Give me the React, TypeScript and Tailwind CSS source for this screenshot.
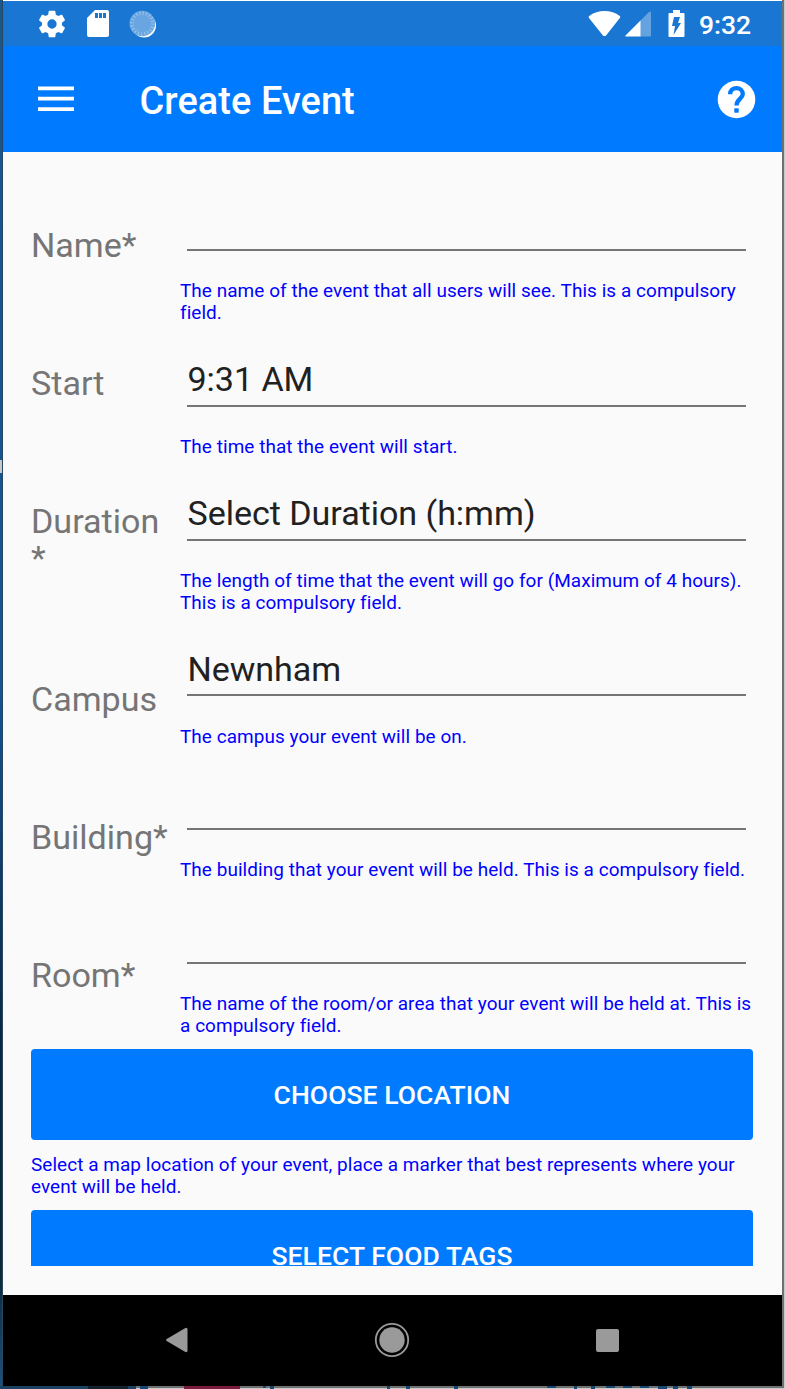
import React from "react";

const labels = ["Name*", "Start", "Duration *", "Campus", "Building*", "Room*"];

const fields = [
  { value: "", hint: ["The name of the event that all users will see. This is a compulsory", "field."] },
  { value: "9:31 AM", hint: ["The time that the event will start."] },
  { value: "Select Duration (h:mm)", hint: ["The length of time that the event will go for (Maximum of 4 hours).", "This is a compulsory field."] },
  { value: "Newnham", hint: ["The campus your event will be on."] },
  { value: "", hint: ["The building that your event will be held. This is a compulsory field."] },
  { value: "", hint: ["The name of the room/or area that your event will be held at. This is", "a compulsory field."] },
];

function Hint({ lines }: { lines: string[] }) {
  return (
    <div className="text-[18.95px] leading-[22px] tracking-[0.065px] whitespace-nowrap text-[#0000ff]">
      {lines.map((line) => (
        <div key={line}>{line}</div>
      ))}
    </div>
  );
}

function StatusBar() {
  return (
    <div className="flex h-[45px] shrink-0 items-center bg-[#1976d2] pr-[30px] pl-[33px] text-white">
      <svg className="size-[32px]" viewBox="0 0 24 24" fill="currentColor">
        <path d="M19.43 12.98c.04-.32.07-.64.07-.98s-.03-.66-.07-.98l2.11-1.65c.19-.15.24-.42.12-.64l-2-3.46c-.12-.22-.39-.3-.61-.22l-2.49 1c-.52-.4-1.08-.73-1.69-.98l-.38-2.65A.488.488 0 0 0 14 2h-4c-.25 0-.46.18-.49.42l-.38 2.65c-.61.25-1.17.59-1.69.98l-2.49-1c-.23-.09-.49 0-.61.22l-2 3.46c-.13.22-.07.49.12.64l2.11 1.65c-.04.32-.07.65-.07.98s.03.66.07.98l-2.11 1.65c-.19.15-.24.42-.12.64l2 3.46c.12.22.39.3.61.22l2.49-1c.52.4 1.08.73 1.69.98l.38 2.65c.03.24.24.42.49.42h4c.25 0 .46-.18.49-.42l.38-2.65c.61-.25 1.17-.59 1.69-.98l2.49 1c.23.09.49 0 .61-.22l2-3.46c.12-.22.07-.49-.12-.64zM12 15.5a3.5 3.5 0 1 1 0-7 3.5 3.5 0 0 1 0 7" />
      </svg>
      <svg className="ml-[19px] h-[27px] w-[22px]" viewBox="0 0 22 27">
        <path fill="currentColor" d="M8 0H20Q22 0 22 2V25Q22 27 20 27H2Q0 27 0 25V8Z" />
        <path fill="#1976d2" d="M8 3h3v5H8zM12 3h3v5h-3zM16 3h3v5h-3z" />
      </svg>
      <svg className="ml-[20px] size-[28px]" viewBox="0 0 28 28">
        <circle cx="15" cy="15.500" r="12" fill="#fff" />
        <circle cx="13.300" cy="13.500" r="12.800" fill="#69a6e1" />
        <circle cx="13.300" cy="13.500" r="10.500" fill="none" stroke="#94c0ea" strokeWidth="3.600" strokeDasharray="1.2 2.1" />
      </svg>
      <div className="flex-1" />
      <svg className="h-[27px] w-[33px]" viewBox="0 0 34 27" fill="currentColor">
        <path d="M17 26.5Q16 26.5 15.2 25.5L.8 7.5Q.2 6.5 1.2 5.7Q8 .5 17 .5T32.8 5.7Q33.7 6.5 33 7.5L18.8 25.5Q18 26.5 17 26.5Z" />
      </svg>
      <svg className="ml-[4px] h-[27px] w-[27px]" viewBox="0 0 27 27">
        <path fill="#65a2e0" d="M15 11 24 2Q26 .5 26 3V25Q26 26.500 25 26.500H15Z" />
        <path fill="#fff" d="M15.500 10.500V26.500H1Q-.5 26.500 1 25Z" />
      </svg>
      <svg className="ml-[16px] h-[27px] w-[17px]" viewBox="0 0 17 27">
        <path fill="#fff" d="M5 0h7v3h3.500Q16.500 3 16.500 4V26Q16.500 27 15.500 27H1.500Q.5 27 .5 26V4Q.5 3 1.500 3H5Z" />
        <path fill="#1976d2" d="M6 7H12L10 13H13L5.500 25L7 16H4Z" />
      </svg>
      <span className="ml-[14px] w-[53px] pt-[2px] text-[26.5px] leading-[30px] font-medium whitespace-nowrap">9:32</span>
    </div>
  );
}

function AppBar() {
  return (
    <header className="flex h-[106px] shrink-0 items-center bg-[#007bff] pr-[26px] pl-[35px] text-white">
      <svg className="h-[26px] w-[36px]" viewBox="0 0 36 26" fill="currentColor">
        <path d="M0 .5h36v3.700H0zM0 10.800h36v3.700H0zM0 21.200h36v3.700H0z" />
      </svg>
      <h1 className="ml-[65.5px] flex-1 pt-[3px] text-[37.9px] leading-[46px] font-medium tracking-[0.08px] whitespace-nowrap">Create Event</h1>
      <svg className="size-[40px]" viewBox="0 0 40 40">
        <circle cx="20.500" cy="20.500" r="18.800" fill="#fff" />
        <path d="M14.100 15.300C14.100 11.300 17 9.100 20.500 9.100S26.800 11.500 26.800 15.100C26.800 19.500 20.500 20 20.500 26.500" fill="none" stroke="#007bff" strokeWidth="4.300" />
        <path d="M18.300 29.300h4.400v4.400h-4.400z" fill="#007bff" />
      </svg>
    </header>
  );
}

function Field({ value, hint }: { value: string; hint: string[] }) {
  return (
    <div className={hint.length === 2 ? "h-[155.9px] shrink-0" : "h-[133.7px] shrink-0"}>
      <div className="ml-[7px] flex h-[66px] w-[559px] items-start border-b-2 border-[#757575] pt-[18.5px] pl-[0.5px] text-[34.1px] leading-[40px] tracking-[-0.05px] whitespace-nowrap text-[#212121]">
        {value}
      </div>
      <div className="pt-[29.3px]">
        <Hint lines={hint} />
      </div>
    </div>
  );
}

function NavBar() {
  return (
    <nav className="flex h-[91px] shrink-0 items-center justify-between bg-black pr-[163px] pl-[162px] text-[#9a9a9a]">
      <svg className="mb-px h-[26px] w-[24px]" viewBox="0 0 24 26" fill="currentColor">
        <path d="M1.700 12 20 1.200Q22.500 0 22.500 2.500V23.500Q22.500 26 20 24.800L1.700 14Q.200 13 1.700 12Z" />
      </svg>
      <svg className="mr-[2px] mb-px size-[36px]" viewBox="0 0 36 36">
        <circle cx="18" cy="18" r="16.200" fill="none" stroke="currentColor" strokeWidth="1.800" />
        <circle cx="18" cy="18" r="12.700" fill="currentColor" />
      </svg>
      <div className="size-[23px] rounded-[2px] bg-[#9a9a9a]" />
    </nav>
  );
}

export default function App() {
  return (
    <div className="h-[1389px] w-[785px] overflow-hidden bg-[#c8c8c8] font-['Roboto',sans-serif]">
      <div className="flex h-[1386px]">
        <div className="flex w-[3px] shrink-0 flex-col border-r border-[#28465f] bg-[linear-gradient(#17588f_0%,#125496_50%,#0b2740_75%,#102834_92%,#195382_100%)]">
          <div className="h-[460px]" />
          <div className="h-[13px] w-[2px] bg-[#c8c8c8]" />
        </div>
        <div className="flex w-[779px] shrink-0 flex-col border-t border-white bg-[#fafafa]">
          <StatusBar />
          <AppBar />
          <main className="h-[1114px] shrink-0 overflow-hidden pr-[29px] pl-[28px]">
            <div className="flex h-[897px]">
              <div className="flex w-[149px] shrink-0 flex-col gap-[98px] pt-[73px] text-[34.1px] leading-[37px] text-[#757575]">
                {labels.map((label) => (
                  <div key={label} className={label === "Duration *" ? "h-[80px] w-[138px] pt-[1.5px]" : "h-[40px] w-[138px] pt-[1.5px]"}>
                    {label}
                  </div>
                ))}
              </div>
              <div className="flex flex-1 flex-col pt-[33px]">
                {fields.map((field, i) => (
                  <Field key={i} {...field} />
                ))}
              </div>
            </div>
            <button className="flex h-[91px] w-full items-center justify-center rounded-[4px] bg-[#007bff] pt-px text-[26.5px] font-medium tracking-[0.06px] text-white">
              CHOOSE LOCATION
            </button>
            <div className="h-[70px] pt-[14px]">
              <Hint lines={["Select a map location of your event, place a marker that best represents where your", "event will be held."]} />
            </div>
            <button className="flex h-[91px] w-full items-center justify-center rounded-[4px] bg-[#007bff] pt-px text-[26.5px] font-medium tracking-[0.06px] text-white">
              SELECT FOOD TAGS
            </button>
          </main>
          <div className="flex-1" />
          <NavBar />
        </div>
        <div className="w-[2px] bg-[#707070]" />
      </div>
      <svg className="block h-[3px] w-[785px]" viewBox="0 0 785 3">
        <path fill="#707070" d="M0 0H784V2H0z" />
        <path fill="#1c4262" d="M0 0H88V3H0z" />
        <path fill="#14202c" d="M88 0H128V3H88z" />
        <path fill="#1c4262" d="M128 0H136V3H128z" />
        <path fill="#781c3c" d="M184 0H240V3H184z" />
        <path fill="#164873" d="M140 0h8v3h-8zM263 0h3v2h-3zM270 0h4v3h-4zM387 0h3v3h-3zM406 0h4v3h-4zM454 0h4v3h-4zM547 0h9v2h-9zM574 0h3v3h-3zM591 0h4v3h-4zM606 0h9v2h-9zM623 0h9v2h-9zM640 0h9v2h-9zM658 0h9v3h-9zM673 0h5v3h-5zM687 0h5v3h-5z" />
      </svg>
    </div>
  );
}
